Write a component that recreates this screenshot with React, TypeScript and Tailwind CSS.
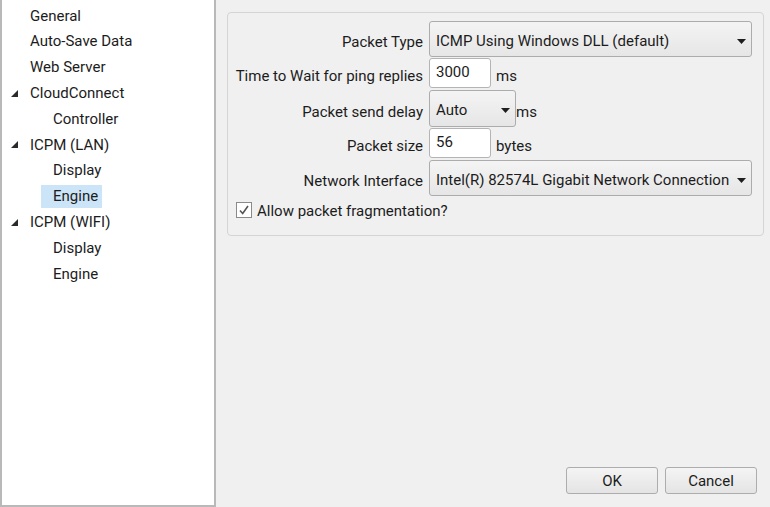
import React from 'react';

const Caret = () => (
  <svg width="9" height="5" viewBox="0 0 9 5" className="shrink-0">
    <path d="M0 0 H9 L4.5 5 Z" fill="#1e1e1e" />
  </svg>
);

const Expander = () => (
  <svg width="7" height="7" viewBox="0 0 7 7" className="shrink-0">
    <path d="M7 0 V7 H0 Z" fill="#2a2a2a" />
  </svg>
);

type Node = { label: string; depth: 0 | 1; open?: boolean; selected?: boolean };

const tree: Node[] = [
  { label: 'General', depth: 0 },
  { label: 'Auto-Save Data', depth: 0 },
  { label: 'Web Server', depth: 0 },
  { label: 'CloudConnect', depth: 0, open: true },
  { label: 'Controller', depth: 1 },
  { label: 'ICPM (LAN)', depth: 0, open: true },
  { label: 'Display', depth: 1 },
  { label: 'Engine', depth: 1, selected: true },
  { label: 'ICPM (WIFI)', depth: 0, open: true },
  { label: 'Display', depth: 1 },
  { label: 'Engine', depth: 1 },
];

const Dropdown = ({ value, width }: { value: string; width: string }) => (
  <div
    className={`${width} h-full flex items-center justify-between pl-[6px] pr-[5px] pt-[4px] rounded-[3px] border border-[#acacac] bg-gradient-to-b from-[#f4f4f4] to-[#e6e6e6]`}
  >
    <span className="whitespace-nowrap">{value}</span>
    <Caret />
  </div>
);

const Field = ({ value }: { value: string }) => (
  <div className="w-[62px] h-full flex items-center pl-[6px] pb-[1px] rounded-[3px] border border-[#b4b4b4] bg-white">
    {value}
  </div>
);

const Row = ({ label, h, children }: { label: string; h: string; children: React.ReactNode }) => (
  <div className={`flex items-stretch ${h}`}>
    <div className="w-[201px] shrink-0 flex items-center justify-end pt-[7px] pr-[6px] whitespace-nowrap">
      {label}
    </div>
    <div className="flex items-stretch">{children}</div>
  </div>
);

export default function App() {
  return (
    <div
      className="w-[770px] h-[507px] flex bg-[#f0f0f0] text-[15px] text-[#1c1c1c] overflow-hidden"
      style={{ fontFamily: 'Roboto, "Noto Sans", sans-serif' }}
    >
      {/* tree */}
      <div className="w-[216px] h-full shrink-0 bg-white border-l-2 border-r-2 border-b-2 border-[#b9b9b9] pt-[3px]">
        {tree.map((n, i) => (
          <div key={i} className="h-[25.8px] flex items-center">
            {n.depth === 0 ? (
              <>
                <div className="w-[28px] pl-[9px] flex items-center">{n.open && <Expander />}</div>
                <span>{n.label}</span>
              </>
            ) : (
              <div className="pl-[39px] h-full flex items-center">
                <span
                  className={`h-[23px] flex items-center pl-[12px] pr-[4px] ${n.selected ? 'bg-[#cce4f7]' : ''}`}
                >
                  {n.label}
                </span>
              </div>
            )}
          </div>
        ))}
      </div>

      {/* settings */}
      <div className="flex-1 flex flex-col pl-[11px] pr-[6px] pt-[12px]">
        <div className="h-[224px] rounded-[4px] border border-[#d4d4d4] pt-[8px] flex flex-col">
          <Row label="Packet Type" h="h-[36px]">
            <Dropdown value="ICMP Using Windows DLL (default)" width="w-[323px]" />
          </Row>
          <div className="h-[1px]" />
          <Row label="Time to Wait for ping replies" h="h-[30px]">
            <Field value="3000" />
            <span className="pl-[5px] pt-[7px] flex items-center">ms</span>
          </Row>
          <div className="h-[2px]" />
          <Row label="Packet send delay" h="h-[37px]">
            <Dropdown value="Auto" width="w-[87px]" />
            <span className="pt-[7px] flex items-center">ms</span>
          </Row>
          <div className="h-[1px]" />
          <Row label="Packet size" h="h-[30px]">
            <Field value="56" />
            <span className="pl-[5px] pt-[7px] flex items-center">bytes</span>
          </Row>
          <div className="h-[2px]" />
          <Row label="Network Interface" h="h-[36px]">
            <Dropdown value="Intel(R) 82574L Gigabit Network Connection" width="w-[323px]" />
          </Row>
          <div className="flex items-center pl-[8px] pt-[2px] gap-[5px]">
            <div className="w-[16px] h-[16px] border border-[#8a8a8a] bg-white flex items-center justify-center">
              <svg width="12" height="12" viewBox="0 0 12 12">
                <path d="M2 6.5 L4.7 9.5 L10 2" fill="none" stroke="#555" strokeWidth="1.6" />
              </svg>
            </div>
            <span className="pt-[2px]">Allow packet fragmentation?</span>
          </div>
        </div>

        <div className="mt-auto flex justify-end gap-[7px] pr-[7px] pb-[13px]">
          {['OK', 'Cancel'].map(b => (
            <div
              key={b}
              className="w-[92px] h-[27px] flex items-center justify-center pt-[1px] rounded-[3px] border border-[#adadad] bg-gradient-to-b from-[#f4f4f4] to-[#e4e4e4]"
            >
              {b}
            </div>
          ))}
        </div>
      </div>
    </div>
  );
}
